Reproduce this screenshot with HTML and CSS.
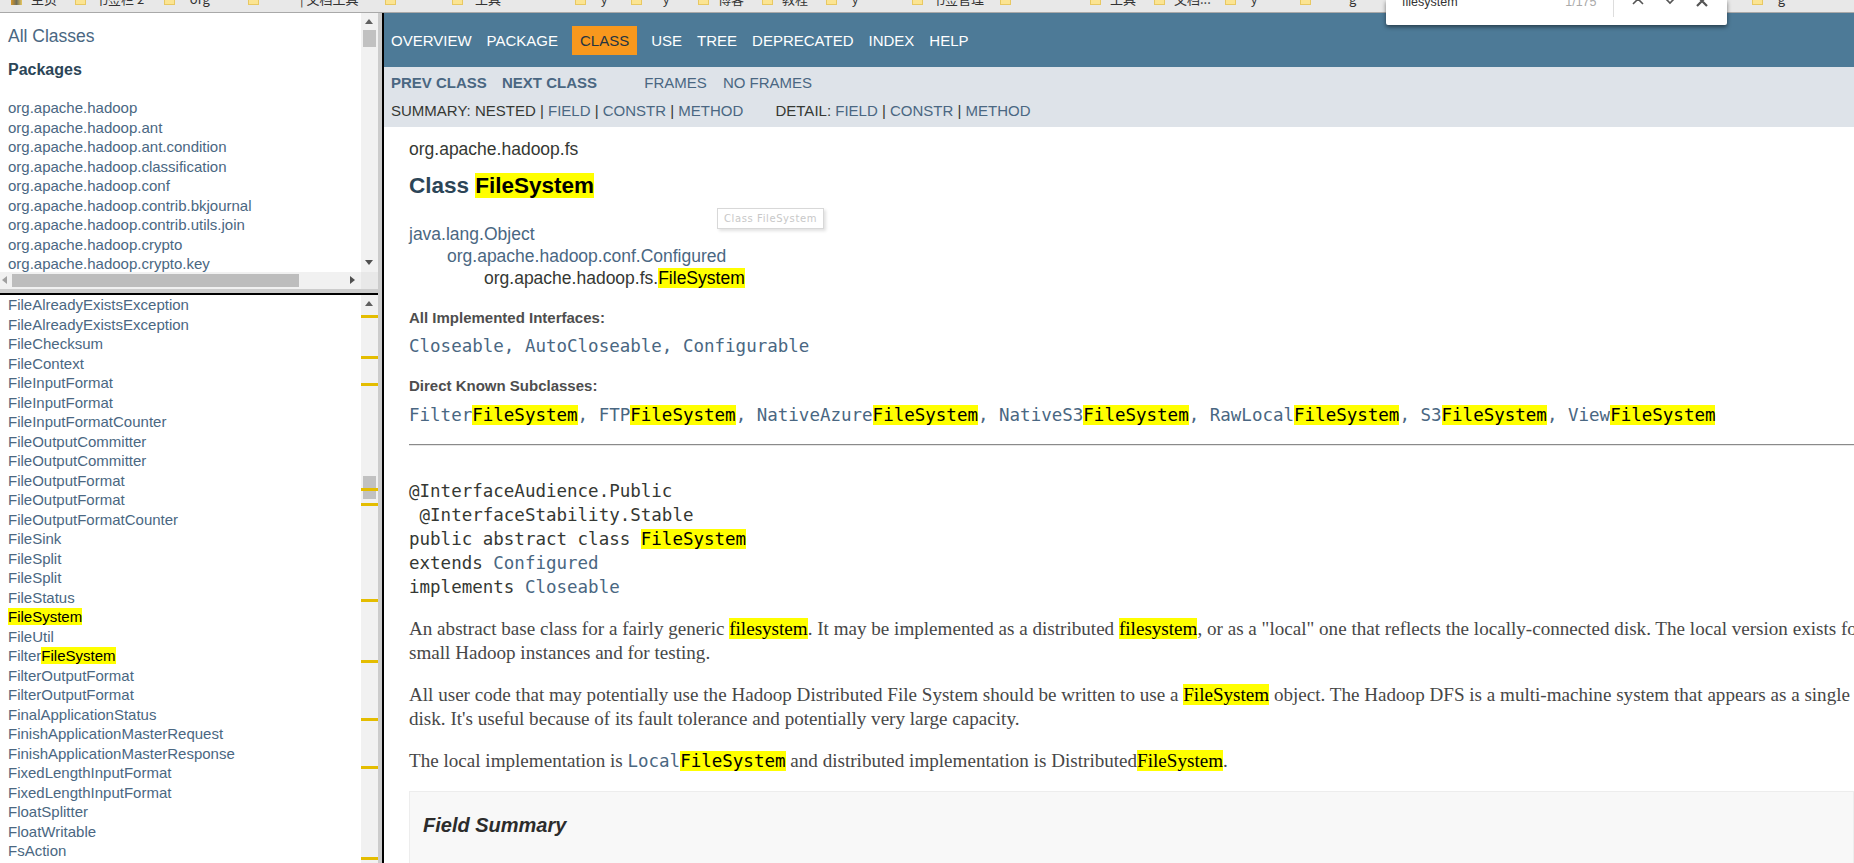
FILE: index.html
```html
<!DOCTYPE html>
<html lang="en">
<head>
    <meta charset="UTF-8">
    <title>FileSystem</title>
    <link rel="stylesheet" href="styles.css">
</head>
<body>
<div class="bookmarks">
    <span class="mark mark-first"><i></i><em>主页</em></span>
    <span class="mark"><i></i><em>书签栏 2</em></span>
    <span class="mark"><i></i><em>&nbsp;&nbsp;org</em></span>
    <span class="mark"><i></i><em>&nbsp;&nbsp;&nbsp;&nbsp;&nbsp;&nbsp;&nbsp;&nbsp;&nbsp;&nbsp;&nbsp;| 文档工具</em></span>
    <span class="mark"><i></i><em></em></span>
    <span class="mark"><i></i><em>&nbsp;工具</em></span>
    <span class="mark"><i></i><em>&nbsp;&nbsp;y</em></span>
    <span class="mark"><i></i><em>&nbsp;&nbsp;&nbsp;&nbsp;y</em></span>
    <span class="mark"><i></i><em>博客</em></span>
    <span class="mark"><i></i><em>教程</em></span>
    <span class="mark"><i></i><em>&nbsp;&nbsp;y</em></span>
    <span class="mark"><i></i><em>书签管理</em></span>
    <span class="mark"><i></i><em></em></span>
    <span class="mark"><i></i><em>工具</em></span>
    <span class="mark"><i></i><em>文档...</em></span>
    <span class="mark"><i></i><em>&nbsp;&nbsp;y</em></span>
    <span class="mark"><i></i><em>&nbsp;&nbsp;&nbsp;&nbsp;&nbsp;&nbsp;&nbsp;&nbsp;&nbsp;&nbsp;g</em></span>
    <span class="mark"><i></i><em>&nbsp;&nbsp;g</em></span>
</div>
<div class="find">
    <span class="find-text">filesystem</span>
    <span class="find-count">1/175</span>
    <span class="find-line"></span>
    <svg class="find-icon" viewBox="0 0 14 14"><path d="M2 10l5-5 5 5"/></svg>
    <svg class="find-icon" viewBox="0 0 14 14"><path d="M2 4l5 5 5-5"/></svg>
    <svg class="find-icon find-close" viewBox="0 0 14 14"><path d="M2 3l10 10M12 3L2 13"/></svg>
</div>
<div class="frames">
    <div class="left">
        <div class="pane-top">
            <div class="pane-view">
                <div class="pane-inner">
                    <h1 class="all">All Classes</h1>
                    <h2 class="pk">Packages</h2>
                    <ul class="list list-pk">
                        <li>org.apache.hadoop</li>
                        <li>org.apache.hadoop.ant</li>
                        <li>org.apache.hadoop.ant.condition</li>
                        <li>org.apache.hadoop.classification</li>
                        <li>org.apache.hadoop.conf</li>
                        <li>org.apache.hadoop.contrib.bkjournal</li>
                        <li>org.apache.hadoop.contrib.utils.join</li>
                        <li>org.apache.hadoop.crypto</li>
                        <li>org.apache.hadoop.crypto.key</li>
                    </ul>
                </div>
                <div class="vbar">
                    <b class="arr arr-up"></b>
                    <b class="thumb"></b>
                    <b class="arr arr-down"></b>
                </div>
            </div>
            <div class="hbar">
                <b class="arr arr-left"></b>
                <b class="hthumb"></b>
                <b class="arr arr-right"></b>
                <b class="corner"></b>
            </div>
        </div>
        <div class="pane-bottom">
            <ul class="list list-cl">
                <li>FileAlreadyExistsException</li>
                <li>FileAlreadyExistsException</li>
                <li>FileChecksum</li>
                <li>FileContext</li>
                <li>FileInputFormat</li>
                <li>FileInputFormat</li>
                <li>FileInputFormatCounter</li>
                <li>FileOutputCommitter</li>
                <li>FileOutputCommitter</li>
                <li>FileOutputFormat</li>
                <li>FileOutputFormat</li>
                <li>FileOutputFormatCounter</li>
                <li>FileSink</li>
                <li>FileSplit</li>
                <li>FileSplit</li>
                <li>FileStatus</li>
                <li><mark>FileSystem</mark></li>
                <li>FileUtil</li>
                <li>Filter<mark>FileSystem</mark></li>
                <li>FilterOutputFormat</li>
                <li>FilterOutputFormat</li>
                <li>FinalApplicationStatus</li>
                <li>FinishApplicationMasterRequest</li>
                <li>FinishApplicationMasterResponse</li>
                <li>FixedLengthInputFormat</li>
                <li>FixedLengthInputFormat</li>
                <li>FloatSplitter</li>
                <li>FloatWritable</li>
                <li>FsAction</li>
            </ul>
            <div class="vbar">
                <b class="arr arr-up"></b>
                <b class="thumb2"></b>
                <s class="tick t1"></s><s class="tick t2"></s><s class="tick t3"></s><s class="tick t4"></s>
                <s class="tick t5"></s><s class="tick t6"></s><s class="tick t7"></s><s class="tick t8"></s>
                <s class="tick t9"></s><s class="tick t10"></s>
            </div>
        </div>
    </div>
    <div class="main">
        <div class="nav">
            <span class="nav-item">OVERVIEW</span>
            <span class="nav-item">PACKAGE</span>
            <span class="nav-item nav-on">CLASS</span>
            <span class="nav-item">USE</span>
            <span class="nav-item">TREE</span>
            <span class="nav-item">DEPRECATED</span>
            <span class="nav-item">INDEX</span>
            <span class="nav-item">HELP</span>
        </div>
        <div class="subnav">
            <div class="subrow">
                <strong class="sub-a">PREV CLASS</strong>
                <strong class="sub-b">NEXT CLASS</strong>
                <span class="sub-c">FRAMES</span>
                <span class="sub-d">NO FRAMES</span>
            </div>
            <div class="subrow">
                <span class="dark">SUMMARY:&nbsp;NESTED&nbsp;|&nbsp;</span>FIELD<span class="dark">&nbsp;|&nbsp;</span>CONSTR<span class="dark">&nbsp;|&nbsp;</span>METHOD
                <span class="detail"><span class="dark">DETAIL:&nbsp;</span>FIELD<span class="dark">&nbsp;|&nbsp;</span>CONSTR<span class="dark">&nbsp;|&nbsp;</span>METHOD</span>
            </div>
        </div>
        <div class="doc">
            <div class="pkg">org.apache.hadoop.fs</div>
            <h2 class="title">Class <mark>FileSystem</mark></h2>
            <div class="tip">Class FileSystem</div>
            <ul class="tree">
                <li>java.lang.Object</li>
                <li class="lv2">org.apache.hadoop.conf.Configured</li>
                <li class="lv3">org.apache.hadoop.fs.<mark>FileSystem</mark></li>
            </ul>
            <div class="label">All Implemented Interfaces:</div>
            <div class="code-line">Closeable, AutoCloseable, Configurable</div>
            <div class="label">Direct Known Subclasses:</div>
            <div class="code-line code-subs">Filter<mark>FileSystem</mark>, FTP<mark>FileSystem</mark>, NativeAzure<mark>FileSystem</mark>, NativeS3<mark>FileSystem</mark>, RawLocal<mark>FileSystem</mark>, S3<mark>FileSystem</mark>, View<mark>FileSystem</mark></div>
            <hr class="rule">
            <pre class="sig">@InterfaceAudience.Public
 @InterfaceStability.Stable
public abstract class <mark>FileSystem</mark>
extends <span class="lnk">Configured</span>
implements <span class="lnk">Closeable</span></pre>
            <p class="para">An abstract base class for a fairly generic <mark>filesystem</mark>. It may be implemented as a distributed <mark>filesystem</mark>, or as a "local" one that reflects the locally-connected disk. The local version exists for the<br>small Hadoop instances and for testing.</p>
            <p class="para">All user code that may potentially use the Hadoop Distributed File System should be written to use a <mark>FileSystem</mark> object. The Hadoop DFS is a multi-machine system that appears as a single<br>disk. It's useful because of its fault tolerance and potentially very large capacity.</p>
            <p class="para">The local implementation is <code class="lnk">Local<mark>FileSystem</mark></code> and distributed implementation is Distributed<mark>FileSystem</mark>.</p>
            <div class="summary"><h3>Field Summary</h3></div>
        </div>
    </div>
</div>
</body>
</html>
```

FILE: styles.css
```css
* {
    margin: 0;
    padding: 0;
    box-sizing: border-box;
}

ul, li {
    list-style: none;
}

html, body {
    height: 863px;
    overflow: hidden;
}

body {
    background: #ffffff;
    font-family: "Liberation Sans", Arial, sans-serif;
    color: #353833;
    position: relative;
}

mark {
    background: #ffff00;
    color: #000000;
}

/* bookmark bar, cut off by the top of the shot */
.bookmarks {
    height: 13px;
    background: #e8e8e8;
    border-bottom: 1px solid #a9a9a9;
    display: grid;
    grid-template-columns: 64px 89px 84px 137px 67px 123px 56px 67px 64px 64px 86px 88px 90px 64px 71px 75px 452px 90px;
    padding-left: 11px;
    font-family: "Noto Sans CJK SC", "Liberation Sans", sans-serif;
    font-size: 13px;
    line-height: 6px;
    color: #333333;
    overflow: hidden;
}

.mark {
    display: flex;
    align-items: flex-start;
    gap: 9px;
    white-space: nowrap;
}

.mark i {
    flex: none;
    width: 11px;
    height: 5px;
    background: #fbe492;
    border: 1px solid #e8c862;
    border-top: 0;
}

.mark em {
    font-style: normal;
    margin-top: -4px;
}

.mark-first i {
    background: linear-gradient(90deg, #d99a2b, #6d6d5a, #e8c862);
    border: 0;
}

.find {
    position: absolute;
    left: 1386px;
    top: 0;
    width: 341px;
    height: 25px;
    background: #ffffff;
    border-radius: 0 0 2px 2px;
    box-shadow: 0 2px 4px rgba(0, 0, 0, 0.5);
    display: flex;
    align-items: flex-start;
    padding-left: 16px;
    font-size: 12.5px;
    line-height: 14px;
    color: #333333;
    z-index: 2;
}

.find-text {
    width: 164px;
    margin-top: -5px;
}

.find-count {
    width: 48px;
    margin-top: -5px;
    color: #aaaaaa;
}

.find-line {
    width: 1px;
    height: 17px;
    margin-right: 17px;
    background: #dddddd;
}

.find-icon {
    flex: none;
    width: 14px;
    height: 14px;
    margin: -6px 18px 0 0;
    fill: none;
    stroke: #555555;
    stroke-width: 1.6;
}

.find-close {
    margin-top: -7px;
    stroke-width: 2.2;
}

.frames {
    display: flex;
    height: 850px;
}

/* left column: two stacked frames, grey gutter, black frame edge */
.left {
    flex: none;
    width: 384px;
    display: flex;
    flex-direction: column;
    padding-right: 4px;
    border-right: 2px solid #000000;
    background: #cccccc;
}

.pane-top {
    flex: none;
    height: 282px;
    display: flex;
    flex-direction: column;
    border-bottom: 2px solid #000000;
    background: #cccccc;
}

.pane-view {
    height: 259px;
    display: flex;
    overflow: hidden;
    background: #ffffff;
}

.pane-inner {
    flex: 1;
    padding-left: 8px;
    overflow: hidden;
}

.all {
    font-size: 17.5px;
    font-weight: normal;
    color: #4a6782;
    margin-top: 14px;
    line-height: 19px;
}

.pk {
    font-size: 16px;
    color: #2c4557;
    margin-top: 16px;
    line-height: 16px;
}

.list {
    font-size: 15px;
    color: #4a6782;
}

.list li {
    height: 19.5px;
    line-height: 19.5px;
    white-space: nowrap;
}

.list-pk {
    margin-top: 20px;
}

.vbar {
    width: 17px;
    background: #f1f1f1;
    position: relative;
    flex: none;
}

.arr {
    position: absolute;
    width: 0;
    height: 0;
    border: 4px solid transparent;
}

.arr-up {
    left: 4px;
    top: 6px;
    border-bottom: 5px solid #606060;
    border-top: 0;
}

.arr-down {
    left: 4px;
    bottom: 7px;
    border-top: 5px solid #505050;
    border-bottom: 0;
}

.thumb {
    position: absolute;
    left: 2px;
    top: 17px;
    width: 13px;
    height: 17px;
    background: #c1c1c1;
}

.hbar {
    height: 17px;
    background: #f1f1f1;
    position: relative;
    flex: none;
}

.hthumb {
    position: absolute;
    left: 12px;
    top: 2px;
    width: 287px;
    height: 13px;
    background: #bdbdbd;
}

.arr-left {
    left: 2px;
    top: 4px;
    border-right: 5px solid #a0a0a0;
    border-left: 0;
}

.arr-right {
    left: 350px;
    top: 4px;
    border-left: 5px solid #505050;
    border-right: 0;
}

.corner {
    position: absolute;
    right: 0;
    top: 0;
    width: 17px;
    height: 17px;
    background: #e8e8e8;
}

.pane-bottom {
    flex: 1;
    display: flex;
    min-height: 0;
    background: #ffffff;
}

.list-cl {
    flex: 1;
    padding-left: 8px;
    overflow: hidden;
}

.thumb2 {
    position: absolute;
    left: 2px;
    top: 181px;
    width: 13px;
    height: 23px;
    background: #c1c1c1;
}

.tick {
    position: absolute;
    left: 0;
    width: 17px;
    height: 3px;
    background: #e4bd00;
}

.t1 { top: 20px; }
.t2 { top: 61px; }
.t3 { top: 88px; }
.t4 { top: 193px; }
.t5 { top: 208px; }
.t6 { top: 304px; }
.t7 { top: 365px; }
.t8 { top: 423px; }
.t9 { top: 471px; }
.t10 { top: 562px; }

.main {
    flex: 1;
    min-width: 0;
    overflow: hidden;
}

.nav {
    height: 54px;
    background: #4d7a97;
    display: flex;
    align-items: center;
    gap: 15px;
    padding: 1px 0 0 7px;
    color: #ffffff;
    font-size: 15px;
}

.nav-item {
    line-height: 29px;
}

.nav-on {
    background: #f8981d;
    color: #253441;
    padding: 0 8px;
    margin: 0 -1px;
}

.subnav {
    height: 60px;
    background: #dee3e9;
    padding: 3px 0 0 7px;
    font-size: 15px;
    color: #4a6782;
}

.subrow {
    height: 28px;
    line-height: 26px;
    white-space: nowrap;
}

.dark {
    color: #353833;
}

.sub-a {
    margin-right: 11px;
}

.sub-b {
    margin-right: 43px;
}

.sub-c {
    margin-right: 12px;
}

.detail {
    margin-left: 28px;
}

.doc {
    padding: 13px 0 0 25px;
    position: relative;
    font-size: 17.5px;
}

.pkg {
    line-height: 18px;
}

.title {
    font-size: 22.5px;
    color: #2c4557;
    line-height: 26px;
    margin-top: 15px;
}

.tip {
    position: absolute;
    left: 333px;
    top: 81px;
    width: 107px;
    height: 21px;
    border: 1px solid #d8d8d8;
    box-shadow: 2px 2px 3px rgba(0, 0, 0, 0.12);
    background: #ffffff;
    font-family: "DejaVu Sans", sans-serif;
    font-size: 10px;
    letter-spacing: 0.6px;
    line-height: 19px;
    text-align: center;
    color: #c8c8c8;
}

.tree {
    margin-top: 24px;
    color: #4a6782;
}

.tree li {
    height: 22px;
    line-height: 22px;
    white-space: nowrap;
}

.lv2 {
    padding-left: 38px;
}

.lv3 {
    padding-left: 75px;
    color: #353833;
}

.label {
    font-size: 15px;
    font-weight: bold;
    color: #4e4e4e;
    line-height: 16px;
    margin-top: 21px;
}

.code-line {
    font-family: "DejaVu Sans Mono", monospace;
    font-size: 17.5px;
    color: #4a6782;
    line-height: 20px;
    margin-top: 10px;
    white-space: nowrap;
}

.code-line + .label {
    margin-top: 22px;
}

.code-subs {
    margin-top: 11px;
}

.rule {
    height: 2px;
    border: 0;
    border-top: 1px solid #8a8a8a;
    border-bottom: 1px solid #e6e6e6;
    margin-top: 19px;
}

.sig {
    font-family: "DejaVu Sans Mono", monospace;
    font-size: 17.5px;
    line-height: 24px;
    color: #353833;
    margin: 33px 0 1px;
}

.lnk {
    color: #4a6782;
}

.para {
    font-family: "Liberation Serif", "Times New Roman", serif;
    font-size: 19.1px;
    line-height: 24px;
    color: #474747;
    margin-top: 18px;
    white-space: nowrap;
}

.para code {
    font-family: "DejaVu Sans Mono", monospace;
    font-size: 17.5px;
}

.summary {
    margin-top: 18px;
    height: 100px;
    background: #f8f8f8;
    border: 1px solid #ededed;
    padding: 21px 0 0 13px;
}

.summary h3 {
    font-size: 20px;
    font-style: italic;
    color: #2c2c2c;
    line-height: 24px;
}
```
